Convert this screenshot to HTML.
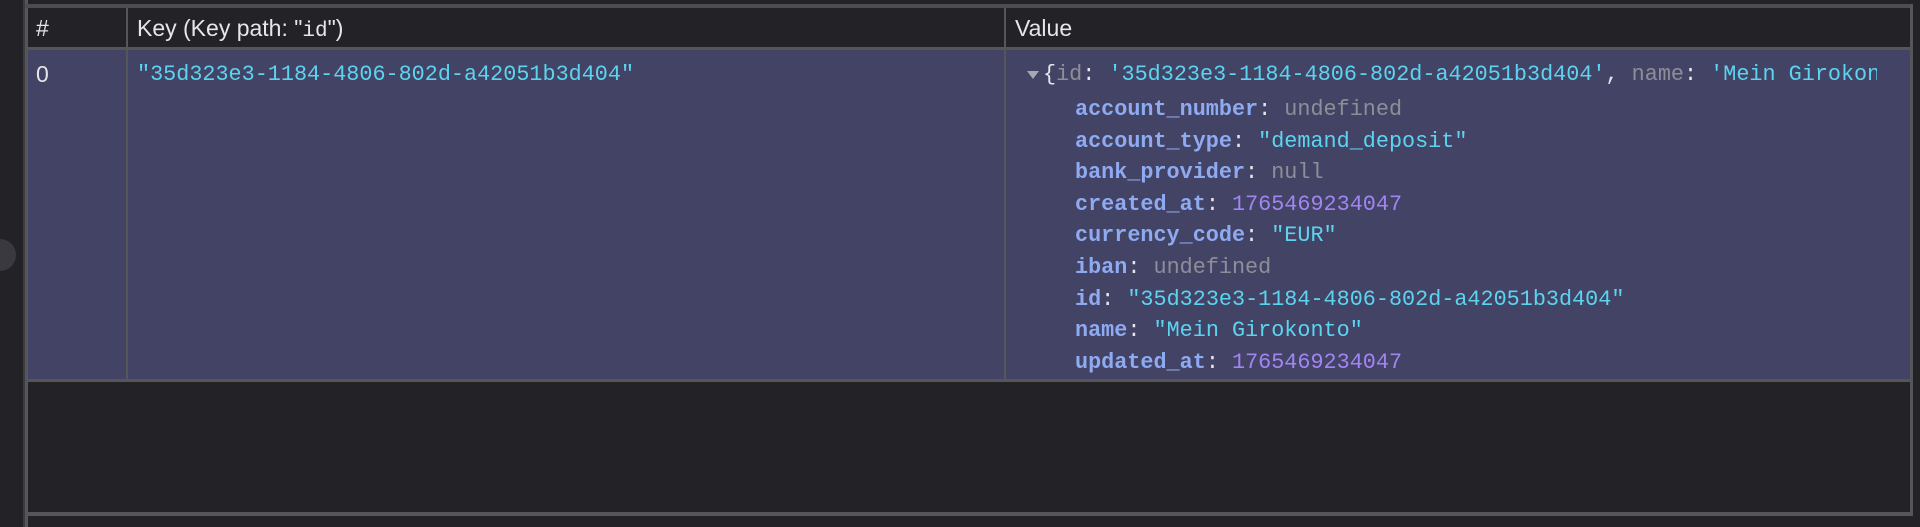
<!DOCTYPE html>
<html><head><style>
body{margin:0;width:1920px;height:527px;background:#232227;position:relative;overflow:hidden;font-family:"Liberation Sans",sans-serif}
.a{position:absolute}
.m{font-family:"Liberation Mono",monospace;font-size:21.8px;white-space:nowrap}
.k{color:#8eaaf0;font-weight:bold}
.s{color:#5cd4ef}
.n{color:#a285f2}
.g{color:#8e8e98}
.p{color:#e6e6ea}
.h{font-size:23px}
</style></head><body>
<div class="a" style="left:-16px;top:239px;width:32px;height:32px;border-radius:50%;background:#3a393f"></div>
<div class="a" style="left:23px;top:0;width:2px;height:527px;background:#3c3b40"></div>
<div class="a" style="left:25px;top:0;width:3px;height:527px;background:#56555a"></div>
<div class="a" style="left:25px;top:4px;width:1888px;height:4px;background:#4d4c52"></div>
<div class="a" style="left:1910px;top:4px;width:3px;height:512px;background:#56555a"></div>
<div class="a" style="left:28px;top:47px;width:1882px;height:3px;background:#56555a"></div>
<div class="a" style="left:28px;top:50px;width:1882px;height:329px;background:#434366"></div>
<div class="a" style="left:28px;top:379px;width:1882px;height:3px;background:#56555a"></div>
<div class="a" style="left:28px;top:512px;width:1885px;height:4px;background:#56555a"></div>
<div class="a" style="left:126px;top:8px;width:2px;height:371px;background:#56555a"></div>
<div class="a" style="left:1004px;top:8px;width:2px;height:371px;background:#56555a"></div>
<div class="a p h" style="left:36px;top:15px">#</div>
<div class="a p h" style="left:137px;top:15px">Key (Key path: "<span style="font-family:'Liberation Mono',monospace;font-size:21px">id</span>")</div>
<div class="a p h" style="left:1015px;top:15px">Value</div>
<div class="a p h" style="left:36px;top:61px">0</div>
<div class="a m s" style="left:137px;top:62px">"35d323e3-1184-4806-802d-a42051b3d404"</div>
<div class="a" style="left:1027px;top:71px;width:0;height:0;border-left:6px solid transparent;border-right:6px solid transparent;border-top:8px solid #a8a8b2"></div>
<div class="a m" style="left:1043px;top:62px;width:834px;overflow:hidden"><span class="p">{</span><span class="g">id</span><span class="p">: </span><span class="s">'35d323e3-1184-4806-802d-a42051b3d404'</span><span class="p">, </span><span class="g">name</span><span class="p">: </span><span class="s">'Mein Girokonto'</span></div>
<div class="a m" style="left:1075px;top:94px;line-height:31.6px">
<div><span class="k">account_number</span><span class="p">: </span><span class="g">undefined</span></div>
<div><span class="k">account_type</span><span class="p">: </span><span class="s">"demand_deposit"</span></div>
<div><span class="k">bank_provider</span><span class="p">: </span><span class="g">null</span></div>
<div><span class="k">created_at</span><span class="p">: </span><span class="n">1765469234047</span></div>
<div><span class="k">currency_code</span><span class="p">: </span><span class="s">"EUR"</span></div>
<div><span class="k">iban</span><span class="p">: </span><span class="g">undefined</span></div>
<div><span class="k">id</span><span class="p">: </span><span class="s">"35d323e3-1184-4806-802d-a42051b3d404"</span></div>
<div><span class="k">name</span><span class="p">: </span><span class="s">"Mein Girokonto"</span></div>
<div><span class="k">updated_at</span><span class="p">: </span><span class="n">1765469234047</span></div>
</div>
</body></html>
